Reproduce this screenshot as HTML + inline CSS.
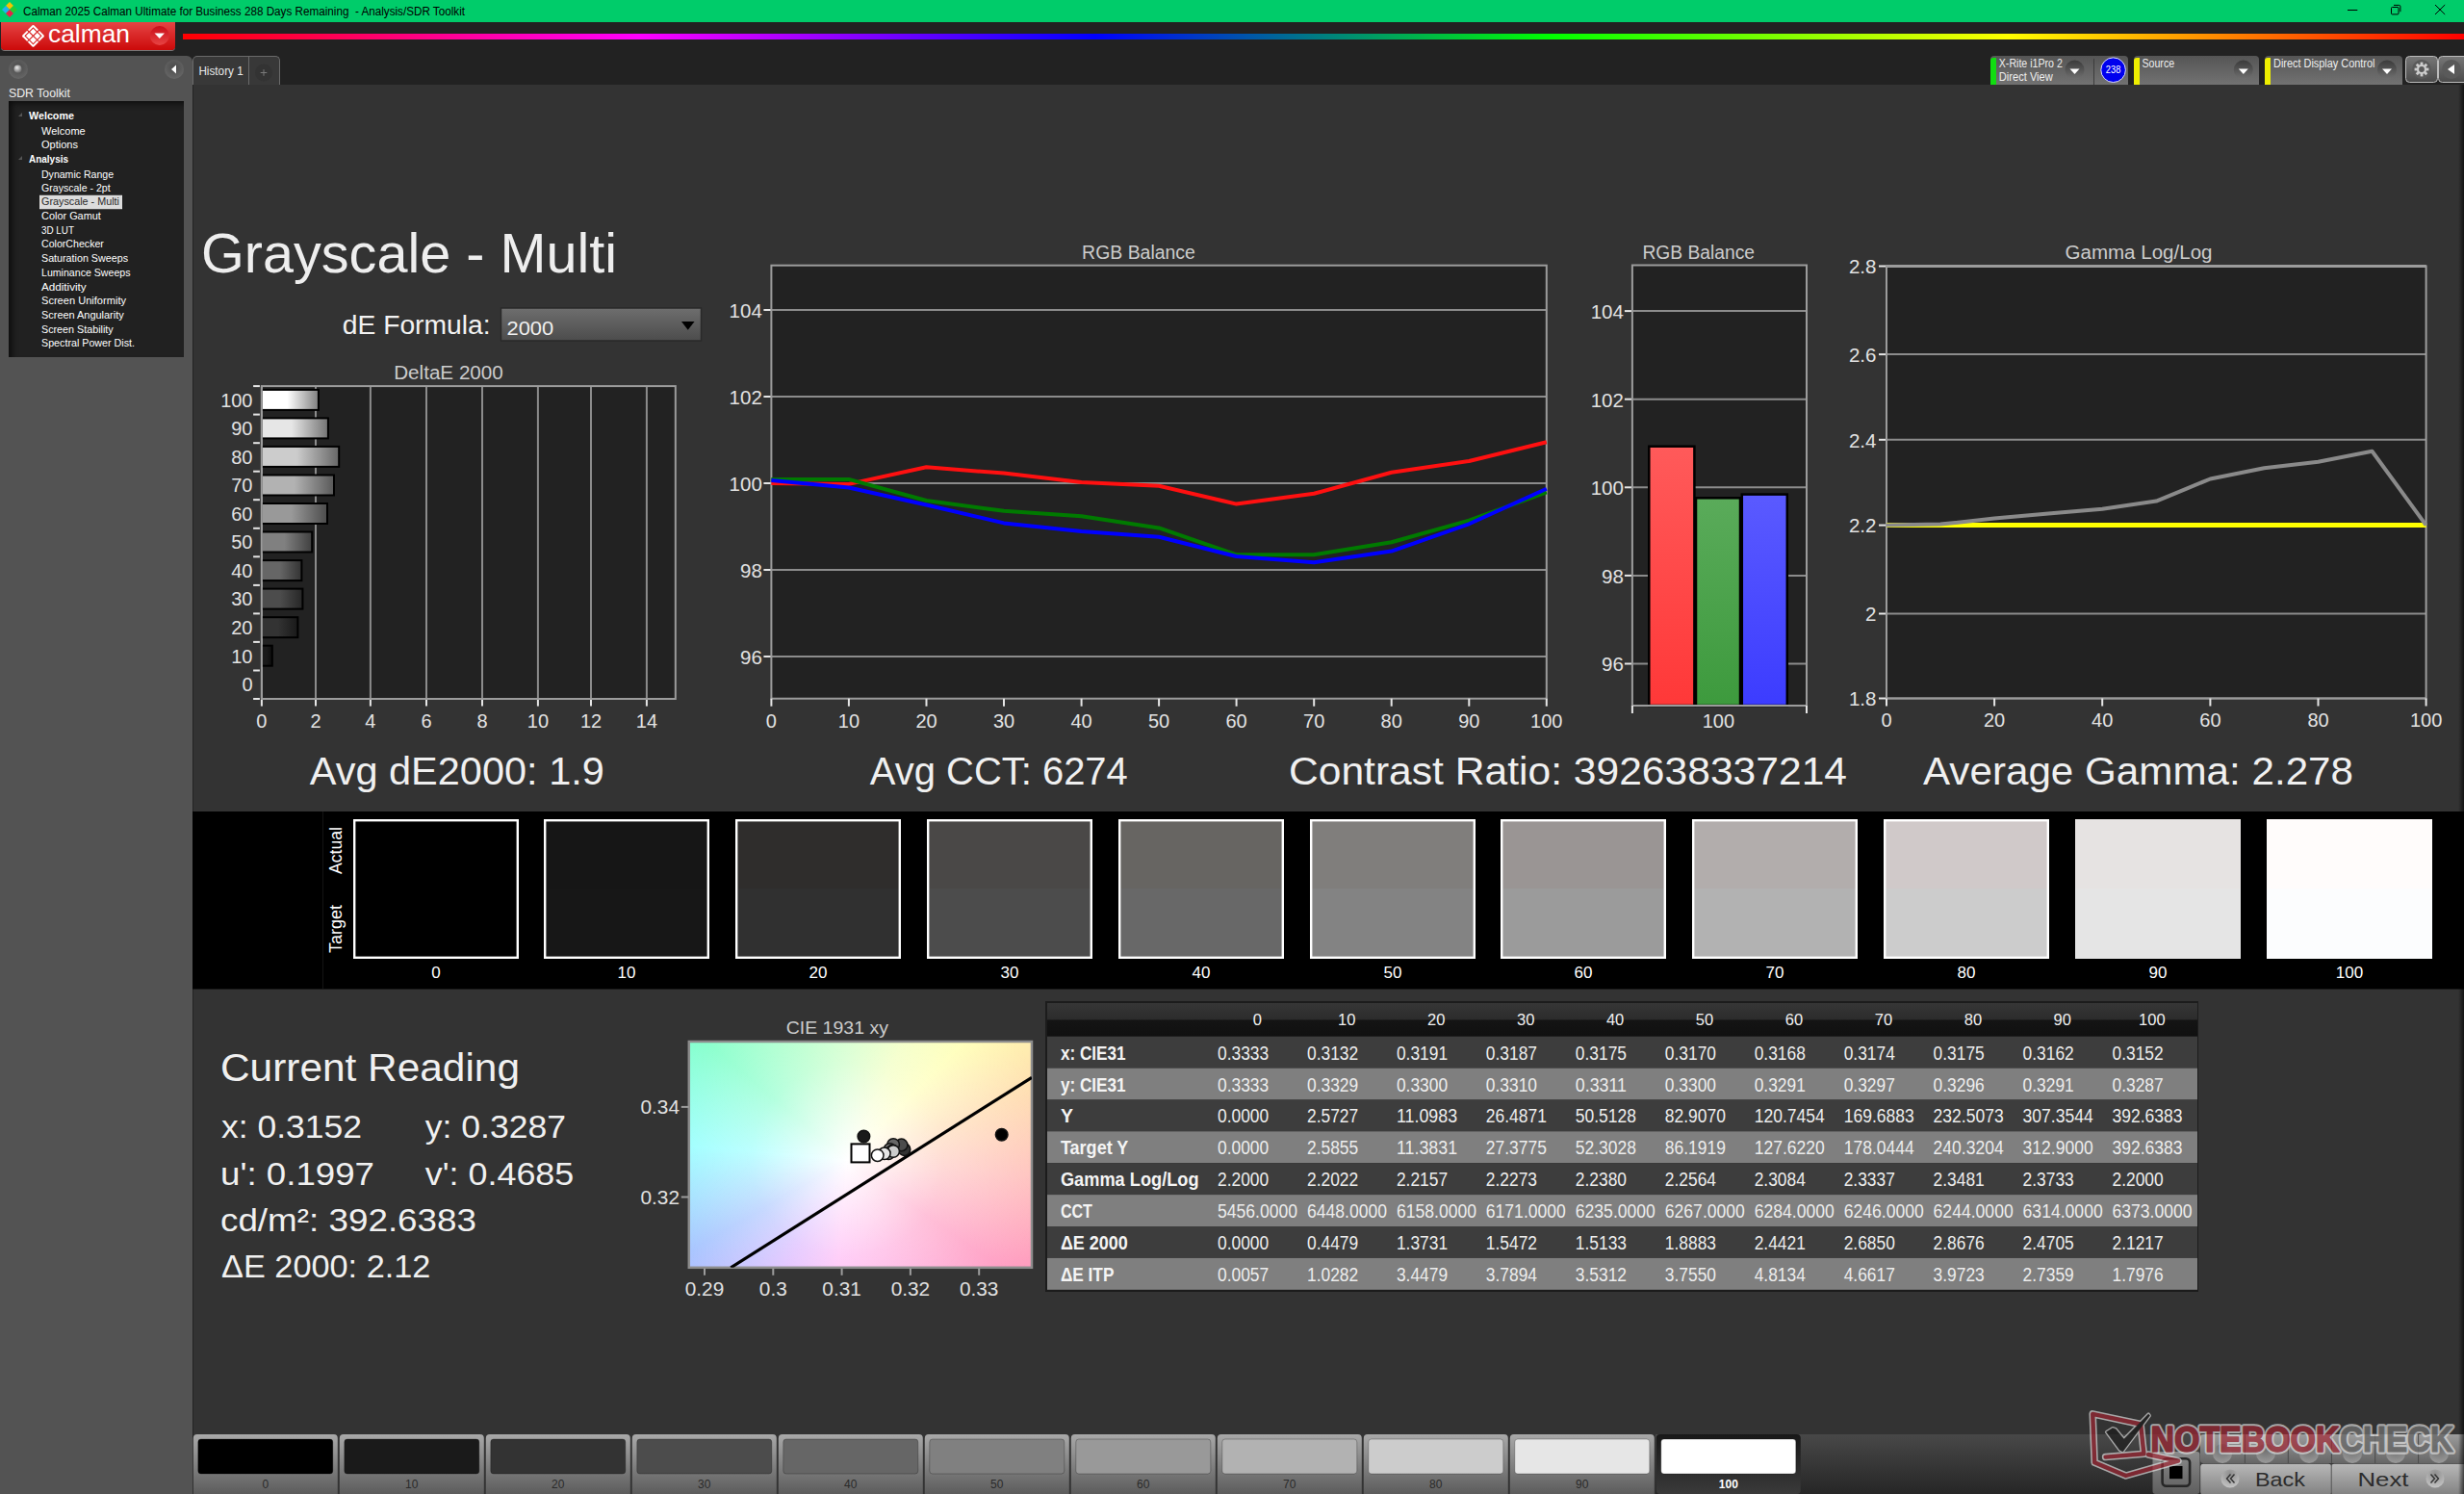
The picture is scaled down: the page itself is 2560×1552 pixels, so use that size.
<!DOCTYPE html>
<html><head><meta charset="utf-8"><title>Calman - Grayscale Multi</title>
<style>
html,body{margin:0;padding:0;width:2560px;height:1552px;overflow:hidden;background:#222;font-family:"Liberation Sans",sans-serif;}
</style></head><body>
<div style="position:absolute;left:0;top:0;width:2560px;height:23px;background:#00cc6a;"></div>
<svg style="position:absolute;left:0;top:0" width="24" height="23">
<polygon points="10,2 14,6 10,10 6,6" fill="#f5c400"/>
<polygon points="6,6 10,10 6,14 2,10" fill="#1eb4f0"/>
<polygon points="14,6 18,10 14,14 10,10" fill="#22cc33"/>
<polygon points="10,10 14,14 10,18 6,14" fill="#e8204a"/>
</svg>
<svg style="position:absolute;left:0;top:0" width="600" height="23"><text x="24" y="15.5" font-family="Liberation Sans" font-size="12" fill="#000" textLength="459" lengthAdjust="spacingAndGlyphs" xml:space="preserve">Calman 2025 Calman Ultimate for Business 288 Days Remaining  - Analysis/SDR Toolkit</text></svg>
<svg style="position:absolute;left:2420px;top:0" width="140" height="23">
<line x1="19" y1="10.5" x2="29.3" y2="10.5" stroke="#000" stroke-width="1"/>
<rect x="64.5" y="7.5" width="7.5" height="7.4" rx="1" fill="none" stroke="#000" stroke-width="1"/>
<path d="M67,5.4 H72.5 Q73.9,5.4 73.9,6.8 V12.2" fill="none" stroke="#000" stroke-width="1"/>
<path d="M110,5 L120.2,15 M120.2,5 L110,15" stroke="#000" stroke-width="1"/>
</svg>
<div style="position:absolute;left:0;top:23px;width:2560px;height:65px;background:#222222;"></div>
<div style="position:absolute;left:1px;top:23px;width:181px;height:29px;background:linear-gradient(#e54444,#cc0a0a);border-radius:0 0 4px 4px;box-shadow:0 1px 0 #777;"></div>
<svg style="position:absolute;left:0;top:23px" width="185" height="30">
<g transform="translate(34.47,14.36) rotate(45)">
<rect x="-8.4" y="-8.4" width="16.8" height="16.8" rx="1.2" fill="#fff"/>
<rect x="-5.9" y="-5.9" width="11.8" height="11.8" fill="none" stroke="#d82424" stroke-width="1.1"/>
<line x1="0" y1="-9" x2="0" y2="9" stroke="#d82424" stroke-width="1.1"/>
<line x1="-9" y1="0" x2="9" y2="0" stroke="#d82424" stroke-width="1.1"/>
</g>
<circle cx="165.8" cy="14" r="10" fill="url(#rg1)"/>
<defs><linearGradient id="rg1" x1="0" y1="0" x2="0" y2="1"><stop offset="0" stop-color="#c80d18"/><stop offset="1" stop-color="#e84444"/></linearGradient></defs>
<polygon points="160.5,11.5 171,11.5 165.8,17" fill="#fff"/>
</svg>
<svg style="position:absolute;left:0;top:20px" width="185" height="33"><text x="50" y="24" font-family="Liberation Sans" font-size="26" fill="#fff" textLength="85" lengthAdjust="spacingAndGlyphs">calman</text></svg>
<div style="position:absolute;left:190px;top:35px;width:2370px;height:6px;background:linear-gradient(90deg,#ff0000 0%,#ff00ff 20%,#0000ff 40%,#00ff00 60%,#ffff00 80%,#ff0000 100%);"></div>
<div style="position:absolute;left:0;top:58px;width:200px;height:1494px;background:#535353;border-radius:0 6px 0 0;"></div>
<svg style="position:absolute;left:0;top:58px" width="200" height="30">
<defs><radialGradient id="sb" cx="0.5" cy="0.4" r="0.6"><stop offset="0" stop-color="#4a4a4a"/><stop offset="1" stop-color="#666"/></radialGradient>
<radialGradient id="ball" cx="0.4" cy="0.35" r="0.6"><stop offset="0" stop-color="#eee"/><stop offset="1" stop-color="#777"/></radialGradient></defs>
<circle cx="19" cy="14" r="10" fill="url(#sb)"/>
<circle cx="18.5" cy="13.5" r="4" fill="url(#ball)"/>
<circle cx="181" cy="14" r="10" fill="url(#sb)"/>
<polygon points="178,14 183,9.5 183,18.5" fill="#fff"/>
</svg>
<svg style="position:absolute;left:0;top:85px" width="200" height="20"><text x="9" y="15.5" font-family="Liberation Sans" font-size="12" fill="#eeeeee" textLength="64" lengthAdjust="spacingAndGlyphs">SDR Toolkit</text></svg>
<div style="position:absolute;left:9px;top:105px;width:182px;height:266px;background:#212121;box-shadow:inset 5px 4px 6px -2px #0c0c0c;"></div>
<svg style="position:absolute;left:0;top:0" width="200" height="380">
<rect x="41.4" y="203.2" width="85.2" height="13.6" fill="#dcdcdc" stroke="#f2f2f2" stroke-width="0.8"/>
<text x="30" y="124" font-family="Liberation Sans" font-size="11" font-weight="bold" fill="#ffffff" textLength="46.9" lengthAdjust="spacingAndGlyphs">Welcome</text>
<text x="43" y="140" font-family="Liberation Sans" font-size="11"  fill="#ffffff" textLength="45.7" lengthAdjust="spacingAndGlyphs">Welcome</text>
<text x="43" y="154" font-family="Liberation Sans" font-size="11"  fill="#ffffff" textLength="38" lengthAdjust="spacingAndGlyphs">Options</text>
<text x="30" y="169" font-family="Liberation Sans" font-size="11" font-weight="bold" fill="#ffffff" textLength="41" lengthAdjust="spacingAndGlyphs">Analysis</text>
<text x="43" y="185" font-family="Liberation Sans" font-size="11"  fill="#ffffff" textLength="75" lengthAdjust="spacingAndGlyphs">Dynamic Range</text>
<text x="43" y="199" font-family="Liberation Sans" font-size="11"  fill="#ffffff" textLength="71.7" lengthAdjust="spacingAndGlyphs">Grayscale - 2pt</text>
<text x="43" y="213" font-family="Liberation Sans" font-size="11"  fill="#2a2a2a" textLength="81" lengthAdjust="spacingAndGlyphs">Grayscale - Multi</text>
<text x="43" y="228" font-family="Liberation Sans" font-size="11"  fill="#ffffff" textLength="61.9" lengthAdjust="spacingAndGlyphs">Color Gamut</text>
<text x="43" y="242.7" font-family="Liberation Sans" font-size="11"  fill="#ffffff" textLength="34" lengthAdjust="spacingAndGlyphs">3D LUT</text>
<text x="43" y="257.3" font-family="Liberation Sans" font-size="11"  fill="#ffffff" textLength="64.9" lengthAdjust="spacingAndGlyphs">ColorChecker</text>
<text x="43" y="272.4" font-family="Liberation Sans" font-size="11"  fill="#ffffff" textLength="90" lengthAdjust="spacingAndGlyphs">Saturation Sweeps</text>
<text x="43" y="286.8" font-family="Liberation Sans" font-size="11"  fill="#ffffff" textLength="92.5" lengthAdjust="spacingAndGlyphs">Luminance Sweeps</text>
<text x="43" y="301.6" font-family="Liberation Sans" font-size="11"  fill="#ffffff" textLength="46.7" lengthAdjust="spacingAndGlyphs">Additivity</text>
<text x="43" y="316.3" font-family="Liberation Sans" font-size="11"  fill="#ffffff" textLength="88" lengthAdjust="spacingAndGlyphs">Screen Uniformity</text>
<text x="43" y="331" font-family="Liberation Sans" font-size="11"  fill="#ffffff" textLength="85.7" lengthAdjust="spacingAndGlyphs">Screen Angularity</text>
<text x="43" y="345.7" font-family="Liberation Sans" font-size="11"  fill="#ffffff" textLength="74.7" lengthAdjust="spacingAndGlyphs">Screen Stability</text>
<text x="43" y="360.4" font-family="Liberation Sans" font-size="11"  fill="#ffffff" textLength="97" lengthAdjust="spacingAndGlyphs">Spectral Power Dist.</text>
<polygon points="23,117 23,121 19,121" fill="#555"/>
<polygon points="23,162 23,166 19,166" fill="#555"/>
</svg>
<div style="position:absolute;left:200px;top:58px;width:91px;height:30px;background:#383838;border:1px solid #6a6a6a;border-bottom:none;border-radius:5px 5px 0 0;box-sizing:border-box;"></div>
<div style="position:absolute;left:258px;top:59px;width:1px;height:29px;background:#6a6a6a;"></div>
<svg style="position:absolute;left:200px;top:58px" width="60" height="30"><text x="6.4" y="20" font-family="Liberation Sans" font-size="12" fill="#e8e8e8" textLength="46.3" lengthAdjust="spacingAndGlyphs">History 1</text></svg>
<svg style="position:absolute;left:259px;top:58px" width="32" height="30">
<circle cx="15" cy="17.5" r="9" fill="#333"/>
<path d="M15,14.2 V20.8 M11.7,17.5 H18.3" stroke="#7a7a7a" stroke-width="1"/>
</svg>
<div style="position:absolute;left:2068px;top:58px;width:143px;height:30px;background:linear-gradient(#555,#727272);border-radius:4px 4px 0 0;overflow:hidden;"><div style="position:absolute;left:0;top:2px;width:6px;height:28px;background:#11dd11;border-radius:3px 0 0 0;"></div></div>
<div style="position:absolute;left:2217px;top:58px;width:130px;height:30px;background:linear-gradient(#555,#727272);border-radius:4px 4px 0 0;overflow:hidden;"><div style="position:absolute;left:0;top:2px;width:6px;height:28px;background:#eeee00;border-radius:3px 0 0 0;"></div></div>
<div style="position:absolute;left:2353px;top:58px;width:143px;height:30px;background:linear-gradient(#555,#727272);border-radius:4px 4px 0 0;overflow:hidden;"><div style="position:absolute;left:0;top:2px;width:6px;height:28px;background:#eeee00;border-radius:3px 0 0 0;"></div></div>
<svg style="position:absolute;left:0;top:0" width="2560" height="90"><text x="2076.8" y="69.5" font-family="Liberation Sans" font-size="12" fill="#eeeeee" textLength="66" lengthAdjust="spacingAndGlyphs">X-Rite i1Pro 2</text><text x="2076.8" y="83.6" font-family="Liberation Sans" font-size="12" fill="#eeeeee" textLength="56" lengthAdjust="spacingAndGlyphs">Direct View</text><text x="2225.5" y="69.5" font-family="Liberation Sans" font-size="12" fill="#eeeeee" textLength="33.6" lengthAdjust="spacingAndGlyphs">Source</text><text x="2362" y="69.5" font-family="Liberation Sans" font-size="12" fill="#eeeeee" textLength="105.5" lengthAdjust="spacingAndGlyphs">Direct Display Control</text></svg>
<div style="position:absolute;left:2175px;top:61px;width:1px;height:27px;background:#3c3c3c;"></div>
<svg style="position:absolute;left:2060px;top:50px" width="500" height="40">
<defs><linearGradient id="dg" x1="0" y1="0" x2="0" y2="1"><stop offset="0" stop-color="#3a3a3a"/><stop offset="1" stop-color="#707070"/></linearGradient></defs>
<circle cx="95.5" cy="22.5" r="10" fill="url(#dg)"/>
<polygon points="90.5,21.6 100.5,21.6 95.5,26.9" fill="#fff"/>
<circle cx="270.8" cy="22.5" r="10" fill="url(#dg)"/>
<polygon points="265.8,21.6 275.8,21.6 270.8,26.9" fill="#fff"/>
<circle cx="420" cy="22.5" r="10" fill="url(#dg)"/>
<polygon points="415,21.6 425,21.6 420,26.9" fill="#fff"/>
<circle cx="135.6" cy="22.7" r="12.8" fill="#0000ee" stroke="#dcdcff" stroke-width="1"/>
<text x="135.6" y="26.4" font-family="Liberation Sans" font-size="10.5" fill="#fff" text-anchor="middle" textLength="15.5" lengthAdjust="spacingAndGlyphs">238</text>
<rect x="439.5" y="8.5" width="33" height="27" rx="4" fill="url(#gb)" stroke="#bbb" stroke-width="1"/>
<defs><linearGradient id="gb" x1="0" y1="0" x2="0" y2="1"><stop offset="0" stop-color="#777"/><stop offset="1" stop-color="#4a4a4a"/></linearGradient></defs>
<circle cx="456" cy="22" r="10" fill="#5a5a5a"/>
<g transform="translate(456,22)" fill="none" stroke="#ccc" stroke-width="2.2"><circle r="4"/></g>
<rect x="454.6" y="14.6" width="2.8" height="3.4" fill="#ccc" transform="rotate(0 456 22)"/>
<rect x="454.6" y="14.6" width="2.8" height="3.4" fill="#ccc" transform="rotate(45 456 22)"/>
<rect x="454.6" y="14.6" width="2.8" height="3.4" fill="#ccc" transform="rotate(90 456 22)"/>
<rect x="454.6" y="14.6" width="2.8" height="3.4" fill="#ccc" transform="rotate(135 456 22)"/>
<rect x="454.6" y="14.6" width="2.8" height="3.4" fill="#ccc" transform="rotate(180 456 22)"/>
<rect x="454.6" y="14.6" width="2.8" height="3.4" fill="#ccc" transform="rotate(225 456 22)"/>
<rect x="454.6" y="14.6" width="2.8" height="3.4" fill="#ccc" transform="rotate(270 456 22)"/>
<rect x="454.6" y="14.6" width="2.8" height="3.4" fill="#ccc" transform="rotate(315 456 22)"/>
<rect x="473.5" y="8.5" width="33" height="27" rx="4" fill="url(#gb)" stroke="#bbb" stroke-width="1"/>
<circle cx="487" cy="22" r="10" fill="#5a5a5a"/>
<polygon points="483,22 490,17 490,27" fill="#fff"/>
</svg>
<svg style="position:absolute;left:0;top:0" width="2560" height="1552">
<rect x="200" y="88" width="2360" height="1464" fill="#333333"/><line x1="200.5" y1="88" x2="200.5" y2="1552" stroke="#232323" stroke-width="1"/>
<text x="209" y="283" font-family="Liberation Sans" font-size="58" fill="#eeeeee" text-anchor="start" textLength="432" lengthAdjust="spacingAndGlyphs" >Grayscale - Multi</text>
<text x="355.7" y="347" font-family="Liberation Sans" font-size="27" fill="#f2f2f2" text-anchor="start" textLength="154" lengthAdjust="spacingAndGlyphs" >dE Formula:</text>
<defs><linearGradient id="dd" x1="0" y1="0" x2="0" y2="1"><stop offset="0" stop-color="#6e6e6e"/><stop offset="1" stop-color="#4c4c4c"/></linearGradient></defs>
<rect x="520.5" y="320" width="208" height="34" fill="url(#dd)" stroke="#2a2a2a" stroke-width="1.5"/>
<text x="526.5" y="348" font-family="Liberation Sans" font-size="21" fill="#f0f0f0" text-anchor="start" textLength="48.7" lengthAdjust="spacingAndGlyphs" >2000</text>
<polygon points="708,334 721.5,334 714.75,342.7" fill="#000"/>
<text x="466" y="394" font-family="Liberation Sans" font-size="20" fill="#cccccc" text-anchor="middle" textLength="113.7" lengthAdjust="spacingAndGlyphs" >DeltaE 2000</text>
<rect x="271.9" y="401.1" width="429.9" height="324.9" fill="#222222"/>
<line x1="328.0" y1="401.1" x2="328.0" y2="726" stroke="#8c8c8c" stroke-width="2"/>
<line x1="384.9" y1="401.1" x2="384.9" y2="726" stroke="#8c8c8c" stroke-width="2"/>
<line x1="443.0" y1="401.1" x2="443.0" y2="726" stroke="#8c8c8c" stroke-width="2"/>
<line x1="501.0" y1="401.1" x2="501.0" y2="726" stroke="#8c8c8c" stroke-width="2"/>
<line x1="558.9" y1="401.1" x2="558.9" y2="726" stroke="#8c8c8c" stroke-width="2"/>
<line x1="614.0" y1="401.1" x2="614.0" y2="726" stroke="#8c8c8c" stroke-width="2"/>
<line x1="671.9" y1="401.1" x2="671.9" y2="726" stroke="#8c8c8c" stroke-width="2"/>
<rect x="271.9" y="401.1" width="429.9" height="324.9" fill="none" stroke="#9c9c9c" stroke-width="2"/>
<defs>
<linearGradient id="db0" x1="0" y1="0" x2="1" y2="0"><stop offset="0" stop-color="rgb(0,0,0)"/><stop offset="0.45" stop-color="rgb(0,0,0)"/><stop offset="1" stop-color="rgb(0,0,0)"/></linearGradient>
<linearGradient id="db1" x1="0" y1="0" x2="1" y2="0"><stop offset="0" stop-color="rgb(26,26,26)"/><stop offset="0.45" stop-color="rgb(26,26,26)"/><stop offset="1" stop-color="rgb(13,13,13)"/></linearGradient>
<linearGradient id="db2" x1="0" y1="0" x2="1" y2="0"><stop offset="0" stop-color="rgb(51,51,51)"/><stop offset="0.45" stop-color="rgb(51,51,51)"/><stop offset="1" stop-color="rgb(25,25,25)"/></linearGradient>
<linearGradient id="db3" x1="0" y1="0" x2="1" y2="0"><stop offset="0" stop-color="rgb(76,76,76)"/><stop offset="0.45" stop-color="rgb(76,76,76)"/><stop offset="1" stop-color="rgb(38,38,38)"/></linearGradient>
<linearGradient id="db4" x1="0" y1="0" x2="1" y2="0"><stop offset="0" stop-color="rgb(102,102,102)"/><stop offset="0.45" stop-color="rgb(102,102,102)"/><stop offset="1" stop-color="rgb(51,51,51)"/></linearGradient>
<linearGradient id="db5" x1="0" y1="0" x2="1" y2="0"><stop offset="0" stop-color="rgb(128,128,128)"/><stop offset="0.45" stop-color="rgb(128,128,128)"/><stop offset="1" stop-color="rgb(64,64,64)"/></linearGradient>
<linearGradient id="db6" x1="0" y1="0" x2="1" y2="0"><stop offset="0" stop-color="rgb(153,153,153)"/><stop offset="0.45" stop-color="rgb(153,153,153)"/><stop offset="1" stop-color="rgb(76,76,76)"/></linearGradient>
<linearGradient id="db7" x1="0" y1="0" x2="1" y2="0"><stop offset="0" stop-color="rgb(178,178,178)"/><stop offset="0.45" stop-color="rgb(178,178,178)"/><stop offset="1" stop-color="rgb(89,89,89)"/></linearGradient>
<linearGradient id="db8" x1="0" y1="0" x2="1" y2="0"><stop offset="0" stop-color="rgb(204,204,204)"/><stop offset="0.45" stop-color="rgb(204,204,204)"/><stop offset="1" stop-color="rgb(102,102,102)"/></linearGradient>
<linearGradient id="db9" x1="0" y1="0" x2="1" y2="0"><stop offset="0" stop-color="rgb(230,230,230)"/><stop offset="0.45" stop-color="rgb(230,230,230)"/><stop offset="1" stop-color="rgb(115,115,115)"/></linearGradient>
<linearGradient id="db10" x1="0" y1="0" x2="1" y2="0"><stop offset="0" stop-color="rgb(255,255,255)"/><stop offset="0.45" stop-color="rgb(255,255,255)"/><stop offset="1" stop-color="rgb(127,127,127)"/></linearGradient>
</defs>
<text x="262.5" y="718.0" font-family="Liberation Sans" font-size="20" fill="#e2e2e2" text-anchor="end" >0</text>
<rect x="272" y="670.7" width="10.8" height="21" fill="url(#db1)" stroke="#000" stroke-width="2"/>
<text x="262.5" y="688.5" font-family="Liberation Sans" font-size="20" fill="#e2e2e2" text-anchor="end" >10</text>
<rect x="272" y="641.2" width="37.4" height="21" fill="url(#db2)" stroke="#000" stroke-width="2"/>
<text x="262.5" y="659.0" font-family="Liberation Sans" font-size="20" fill="#e2e2e2" text-anchor="end" >20</text>
<rect x="272" y="611.6" width="42.4" height="21" fill="url(#db3)" stroke="#000" stroke-width="2"/>
<text x="262.5" y="629.4" font-family="Liberation Sans" font-size="20" fill="#e2e2e2" text-anchor="end" >30</text>
<rect x="272" y="582.1" width="41.4" height="21" fill="url(#db4)" stroke="#000" stroke-width="2"/>
<text x="262.5" y="599.9" font-family="Liberation Sans" font-size="20" fill="#e2e2e2" text-anchor="end" >40</text>
<rect x="272" y="552.5" width="52.2" height="21" fill="url(#db5)" stroke="#000" stroke-width="2"/>
<text x="262.5" y="570.3" font-family="Liberation Sans" font-size="20" fill="#e2e2e2" text-anchor="end" >50</text>
<rect x="272" y="523.0" width="68.0" height="21" fill="url(#db6)" stroke="#000" stroke-width="2"/>
<text x="262.5" y="540.8" font-family="Liberation Sans" font-size="20" fill="#e2e2e2" text-anchor="end" >60</text>
<rect x="272" y="493.5" width="75.0" height="21" fill="url(#db7)" stroke="#000" stroke-width="2"/>
<text x="262.5" y="511.3" font-family="Liberation Sans" font-size="20" fill="#e2e2e2" text-anchor="end" >70</text>
<rect x="272" y="463.9" width="80.2" height="21" fill="url(#db8)" stroke="#000" stroke-width="2"/>
<text x="262.5" y="481.7" font-family="Liberation Sans" font-size="20" fill="#e2e2e2" text-anchor="end" >80</text>
<rect x="272" y="434.4" width="68.9" height="21" fill="url(#db9)" stroke="#000" stroke-width="2"/>
<text x="262.5" y="452.2" font-family="Liberation Sans" font-size="20" fill="#e2e2e2" text-anchor="end" >90</text>
<rect x="272" y="404.9" width="58.9" height="21" fill="url(#db10)" stroke="#000" stroke-width="2"/>
<text x="262.5" y="422.7" font-family="Liberation Sans" font-size="20" fill="#e2e2e2" text-anchor="end" >100</text>
<line x1="271.9" y1="401.1" x2="271.9" y2="726" stroke="#9c9c9c" stroke-width="2"/>
<line x1="263.1" y1="401.1" x2="269.9" y2="401.1" stroke="#e6e6e6" stroke-width="2"/>
<line x1="263.1" y1="430.6" x2="269.9" y2="430.6" stroke="#e6e6e6" stroke-width="2"/>
<line x1="263.1" y1="460.2" x2="269.9" y2="460.2" stroke="#e6e6e6" stroke-width="2"/>
<line x1="263.1" y1="489.7" x2="269.9" y2="489.7" stroke="#e6e6e6" stroke-width="2"/>
<line x1="263.1" y1="519.2" x2="269.9" y2="519.2" stroke="#e6e6e6" stroke-width="2"/>
<line x1="263.1" y1="548.8" x2="269.9" y2="548.8" stroke="#e6e6e6" stroke-width="2"/>
<line x1="263.1" y1="578.3" x2="269.9" y2="578.3" stroke="#e6e6e6" stroke-width="2"/>
<line x1="263.1" y1="607.9" x2="269.9" y2="607.9" stroke="#e6e6e6" stroke-width="2"/>
<line x1="263.1" y1="637.4" x2="269.9" y2="637.4" stroke="#e6e6e6" stroke-width="2"/>
<line x1="263.1" y1="666.9" x2="269.9" y2="666.9" stroke="#e6e6e6" stroke-width="2"/>
<line x1="263.1" y1="696.5" x2="269.9" y2="696.5" stroke="#e6e6e6" stroke-width="2"/>
<line x1="263.1" y1="726.0" x2="269.9" y2="726.0" stroke="#e6e6e6" stroke-width="2"/>
<line x1="271.9" y1="727" x2="271.9" y2="733.6" stroke="#e6e6e6" stroke-width="2"/>
<text x="271.9" y="755.6" font-family="Liberation Sans" font-size="20" fill="#e2e2e2" text-anchor="middle" >0</text>
<line x1="328.0" y1="727" x2="328.0" y2="733.6" stroke="#e6e6e6" stroke-width="2"/>
<text x="328.0" y="755.6" font-family="Liberation Sans" font-size="20" fill="#e2e2e2" text-anchor="middle" >2</text>
<line x1="384.9" y1="727" x2="384.9" y2="733.6" stroke="#e6e6e6" stroke-width="2"/>
<text x="384.9" y="755.6" font-family="Liberation Sans" font-size="20" fill="#e2e2e2" text-anchor="middle" >4</text>
<line x1="443.0" y1="727" x2="443.0" y2="733.6" stroke="#e6e6e6" stroke-width="2"/>
<text x="443.0" y="755.6" font-family="Liberation Sans" font-size="20" fill="#e2e2e2" text-anchor="middle" >6</text>
<line x1="501.0" y1="727" x2="501.0" y2="733.6" stroke="#e6e6e6" stroke-width="2"/>
<text x="501.0" y="755.6" font-family="Liberation Sans" font-size="20" fill="#e2e2e2" text-anchor="middle" >8</text>
<line x1="558.9" y1="727" x2="558.9" y2="733.6" stroke="#e6e6e6" stroke-width="2"/>
<text x="558.9" y="755.6" font-family="Liberation Sans" font-size="20" fill="#e2e2e2" text-anchor="middle" >10</text>
<line x1="614.0" y1="727" x2="614.0" y2="733.6" stroke="#e6e6e6" stroke-width="2"/>
<text x="614.0" y="755.6" font-family="Liberation Sans" font-size="20" fill="#e2e2e2" text-anchor="middle" >12</text>
<line x1="671.9" y1="727" x2="671.9" y2="733.6" stroke="#e6e6e6" stroke-width="2"/>
<text x="671.9" y="755.6" font-family="Liberation Sans" font-size="20" fill="#e2e2e2" text-anchor="middle" >14</text>
<text x="1183" y="269.3" font-family="Liberation Sans" font-size="20" fill="#cccccc" text-anchor="middle" textLength="117.8" lengthAdjust="spacingAndGlyphs" >RGB Balance</text>
<rect x="801.4" y="275.7" width="805.4" height="450.00000000000006" fill="#222222"/>
<line x1="801.4" y1="322.0" x2="1606.8" y2="322.0" stroke="#8c8c8c" stroke-width="2"/>
<line x1="793.4" y1="322.0" x2="801.4" y2="322.0" stroke="#e6e6e6" stroke-width="2"/>
<text x="791.8" y="329.8" font-family="Liberation Sans" font-size="20.5" fill="#e2e2e2" text-anchor="end" >104</text>
<line x1="801.4" y1="412.0" x2="1606.8" y2="412.0" stroke="#8c8c8c" stroke-width="2"/>
<line x1="793.4" y1="412.0" x2="801.4" y2="412.0" stroke="#e6e6e6" stroke-width="2"/>
<text x="791.8" y="419.8" font-family="Liberation Sans" font-size="20.5" fill="#e2e2e2" text-anchor="end" >102</text>
<line x1="801.4" y1="502.0" x2="1606.8" y2="502.0" stroke="#8c8c8c" stroke-width="2"/>
<line x1="793.4" y1="502.0" x2="801.4" y2="502.0" stroke="#e6e6e6" stroke-width="2"/>
<text x="791.8" y="509.8" font-family="Liberation Sans" font-size="20.5" fill="#e2e2e2" text-anchor="end" >100</text>
<line x1="801.4" y1="592.0" x2="1606.8" y2="592.0" stroke="#8c8c8c" stroke-width="2"/>
<line x1="793.4" y1="592.0" x2="801.4" y2="592.0" stroke="#e6e6e6" stroke-width="2"/>
<text x="791.8" y="599.8" font-family="Liberation Sans" font-size="20.5" fill="#e2e2e2" text-anchor="end" >98</text>
<line x1="801.4" y1="682.0" x2="1606.8" y2="682.0" stroke="#8c8c8c" stroke-width="2"/>
<line x1="793.4" y1="682.0" x2="801.4" y2="682.0" stroke="#e6e6e6" stroke-width="2"/>
<text x="791.8" y="689.8" font-family="Liberation Sans" font-size="20.5" fill="#e2e2e2" text-anchor="end" >96</text>
<rect x="801.4" y="275.7" width="805.4" height="450.00000000000006" fill="none" stroke="#9c9c9c" stroke-width="2"/>
<line x1="801.4" y1="725.7" x2="801.4" y2="733.7" stroke="#e6e6e6" stroke-width="2"/>
<text x="801.4" y="756" font-family="Liberation Sans" font-size="20" fill="#e2e2e2" text-anchor="middle" >0</text>
<line x1="881.9" y1="725.7" x2="881.9" y2="733.7" stroke="#e6e6e6" stroke-width="2"/>
<text x="881.9" y="756" font-family="Liberation Sans" font-size="20" fill="#e2e2e2" text-anchor="middle" >10</text>
<line x1="962.5" y1="725.7" x2="962.5" y2="733.7" stroke="#e6e6e6" stroke-width="2"/>
<text x="962.5" y="756" font-family="Liberation Sans" font-size="20" fill="#e2e2e2" text-anchor="middle" >20</text>
<line x1="1043.0" y1="725.7" x2="1043.0" y2="733.7" stroke="#e6e6e6" stroke-width="2"/>
<text x="1043.0" y="756" font-family="Liberation Sans" font-size="20" fill="#e2e2e2" text-anchor="middle" >30</text>
<line x1="1123.6" y1="725.7" x2="1123.6" y2="733.7" stroke="#e6e6e6" stroke-width="2"/>
<text x="1123.6" y="756" font-family="Liberation Sans" font-size="20" fill="#e2e2e2" text-anchor="middle" >40</text>
<line x1="1204.1" y1="725.7" x2="1204.1" y2="733.7" stroke="#e6e6e6" stroke-width="2"/>
<text x="1204.1" y="756" font-family="Liberation Sans" font-size="20" fill="#e2e2e2" text-anchor="middle" >50</text>
<line x1="1284.6" y1="725.7" x2="1284.6" y2="733.7" stroke="#e6e6e6" stroke-width="2"/>
<text x="1284.6" y="756" font-family="Liberation Sans" font-size="20" fill="#e2e2e2" text-anchor="middle" >60</text>
<line x1="1365.2" y1="725.7" x2="1365.2" y2="733.7" stroke="#e6e6e6" stroke-width="2"/>
<text x="1365.2" y="756" font-family="Liberation Sans" font-size="20" fill="#e2e2e2" text-anchor="middle" >70</text>
<line x1="1445.7" y1="725.7" x2="1445.7" y2="733.7" stroke="#e6e6e6" stroke-width="2"/>
<text x="1445.7" y="756" font-family="Liberation Sans" font-size="20" fill="#e2e2e2" text-anchor="middle" >80</text>
<line x1="1526.3" y1="725.7" x2="1526.3" y2="733.7" stroke="#e6e6e6" stroke-width="2"/>
<text x="1526.3" y="756" font-family="Liberation Sans" font-size="20" fill="#e2e2e2" text-anchor="middle" >90</text>
<line x1="1606.8" y1="725.7" x2="1606.8" y2="733.7" stroke="#e6e6e6" stroke-width="2"/>
<text x="1606.8" y="756" font-family="Liberation Sans" font-size="20" fill="#e2e2e2" text-anchor="middle" >100</text>
<polyline points="801.4,502.0 881.9,502.9 962.5,485.3 1043.0,491.6 1123.6,501.1 1204.1,504.7 1284.6,523.6 1365.2,512.8 1445.7,490.8 1526.3,479.0 1606.8,459.2" fill="none" stroke="#ff1010" stroke-width="4" stroke-linejoin="round"/>
<polyline points="801.4,497.9 881.9,497.9 962.5,520.0 1043.0,530.8 1123.6,536.2 1204.1,548.4 1284.6,576.3 1365.2,576.3 1445.7,563.2 1526.3,540.7 1606.8,511.4" fill="none" stroke="#007a00" stroke-width="4" stroke-linejoin="round"/>
<polyline points="801.4,498.9 881.9,506.5 962.5,524.5 1043.0,543.4 1123.6,551.9 1204.1,557.8 1284.6,578.0 1365.2,584.3 1445.7,572.6 1526.3,544.3 1606.8,507.8" fill="none" stroke="#0000ff" stroke-width="4" stroke-linejoin="round"/>
<text x="1764.7" y="268.6" font-family="Liberation Sans" font-size="20" fill="#cccccc" text-anchor="middle" textLength="116.6" lengthAdjust="spacingAndGlyphs" >RGB Balance</text>
<rect x="1695.9" y="275.5" width="181.0999999999999" height="457.5" fill="#222222"/>
<line x1="1695.9" y1="323.1" x2="1877" y2="323.1" stroke="#8c8c8c" stroke-width="2"/>
<line x1="1687.9" y1="323.1" x2="1695.9" y2="323.1" stroke="#e6e6e6" stroke-width="2"/>
<text x="1686.9" y="330.9" font-family="Liberation Sans" font-size="20.5" fill="#e2e2e2" text-anchor="end" >104</text>
<line x1="1695.9" y1="414.7" x2="1877" y2="414.7" stroke="#8c8c8c" stroke-width="2"/>
<line x1="1687.9" y1="414.7" x2="1695.9" y2="414.7" stroke="#e6e6e6" stroke-width="2"/>
<text x="1686.9" y="422.5" font-family="Liberation Sans" font-size="20.5" fill="#e2e2e2" text-anchor="end" >102</text>
<line x1="1695.9" y1="506.3" x2="1877" y2="506.3" stroke="#8c8c8c" stroke-width="2"/>
<line x1="1687.9" y1="506.3" x2="1695.9" y2="506.3" stroke="#e6e6e6" stroke-width="2"/>
<text x="1686.9" y="514.1" font-family="Liberation Sans" font-size="20.5" fill="#e2e2e2" text-anchor="end" >100</text>
<line x1="1695.9" y1="597.9" x2="1877" y2="597.9" stroke="#8c8c8c" stroke-width="2"/>
<line x1="1687.9" y1="597.9" x2="1695.9" y2="597.9" stroke="#e6e6e6" stroke-width="2"/>
<text x="1686.9" y="605.7" font-family="Liberation Sans" font-size="20.5" fill="#e2e2e2" text-anchor="end" >98</text>
<line x1="1695.9" y1="689.5" x2="1877" y2="689.5" stroke="#8c8c8c" stroke-width="2"/>
<line x1="1687.9" y1="689.5" x2="1695.9" y2="689.5" stroke="#e6e6e6" stroke-width="2"/>
<text x="1686.9" y="697.3" font-family="Liberation Sans" font-size="20.5" fill="#e2e2e2" text-anchor="end" >96</text>
<defs><linearGradient id="br" x1="0" y1="0" x2="0" y2="1"><stop offset="0" stop-color="#ff5a5a"/><stop offset="1" stop-color="#ff3838"/></linearGradient><linearGradient id="bgg" x1="0" y1="0" x2="0" y2="1"><stop offset="0" stop-color="#5aab5a"/><stop offset="1" stop-color="#3d9a3d"/></linearGradient><linearGradient id="bb" x1="0" y1="0" x2="0" y2="1"><stop offset="0" stop-color="#5a5aff"/><stop offset="1" stop-color="#3c3cff"/></linearGradient></defs>
<rect x="1713.3" y="463.7" width="47.1" height="269.3" fill="url(#br)" stroke="#000" stroke-width="2.5"/>
<rect x="1762" y="517.3" width="46.0" height="215.7" fill="url(#bgg)" stroke="#000" stroke-width="2.5"/>
<rect x="1809.8" y="513.6" width="47.0" height="219.4" fill="url(#bb)" stroke="#000" stroke-width="2.5"/>
<rect x="1695.9" y="275.5" width="181.0999999999999" height="457.5" fill="none" stroke="#9c9c9c" stroke-width="2"/>
<line x1="1695.9" y1="733" x2="1695.9" y2="741" stroke="#e6e6e6" stroke-width="2"/>
<line x1="1877" y1="733" x2="1877" y2="741" stroke="#e6e6e6" stroke-width="2"/>
<text x="1785.4" y="755.5" font-family="Liberation Sans" font-size="20" fill="#e2e2e2" text-anchor="middle" >100</text>
<text x="2222" y="268.5" font-family="Liberation Sans" font-size="20" fill="#cccccc" text-anchor="middle" textLength="153" lengthAdjust="spacingAndGlyphs" >Gamma Log/Log</text>
<rect x="1960" y="276.5" width="560.5999999999999" height="449.0" fill="#222222"/>
<line x1="1960" y1="276.5" x2="2520.6" y2="276.5" stroke="#8c8c8c" stroke-width="2"/>
<line x1="1952" y1="276.5" x2="1960" y2="276.5" stroke="#e6e6e6" stroke-width="2"/>
<text x="1949.4" y="284.3" font-family="Liberation Sans" font-size="20.5" fill="#e2e2e2" text-anchor="end" >2.8</text>
<line x1="1960" y1="368.1" x2="2520.6" y2="368.1" stroke="#8c8c8c" stroke-width="2"/>
<line x1="1952" y1="368.1" x2="1960" y2="368.1" stroke="#e6e6e6" stroke-width="2"/>
<text x="1949.4" y="375.9" font-family="Liberation Sans" font-size="20.5" fill="#e2e2e2" text-anchor="end" >2.6</text>
<line x1="1960" y1="456.8" x2="2520.6" y2="456.8" stroke="#8c8c8c" stroke-width="2"/>
<line x1="1952" y1="456.8" x2="1960" y2="456.8" stroke="#e6e6e6" stroke-width="2"/>
<text x="1949.4" y="464.6" font-family="Liberation Sans" font-size="20.5" fill="#e2e2e2" text-anchor="end" >2.4</text>
<line x1="1960" y1="545.6" x2="2520.6" y2="545.6" stroke="#8c8c8c" stroke-width="2"/>
<line x1="1952" y1="545.6" x2="1960" y2="545.6" stroke="#e6e6e6" stroke-width="2"/>
<text x="1949.4" y="553.4" font-family="Liberation Sans" font-size="20.5" fill="#e2e2e2" text-anchor="end" >2.2</text>
<line x1="1960" y1="637.5" x2="2520.6" y2="637.5" stroke="#8c8c8c" stroke-width="2"/>
<line x1="1952" y1="637.5" x2="1960" y2="637.5" stroke="#e6e6e6" stroke-width="2"/>
<text x="1949.4" y="645.3" font-family="Liberation Sans" font-size="20.5" fill="#e2e2e2" text-anchor="end" >2</text>
<line x1="1960" y1="725.5" x2="2520.6" y2="725.5" stroke="#8c8c8c" stroke-width="2"/>
<line x1="1952" y1="725.5" x2="1960" y2="725.5" stroke="#e6e6e6" stroke-width="2"/>
<text x="1949.4" y="733.3" font-family="Liberation Sans" font-size="20.5" fill="#e2e2e2" text-anchor="end" >1.8</text>
<rect x="1960" y="276.5" width="560.5999999999999" height="449.0" fill="none" stroke="#9c9c9c" stroke-width="2"/>
<line x1="1960" y1="276.5" x2="2520.6" y2="276.5" stroke="#9c9c9c" stroke-width="3"/>
<line x1="1960.0" y1="725.5" x2="1960.0" y2="733.5" stroke="#e6e6e6" stroke-width="2"/>
<text x="1960.0" y="755" font-family="Liberation Sans" font-size="20" fill="#e2e2e2" text-anchor="middle" >0</text>
<line x1="2072.1" y1="725.5" x2="2072.1" y2="733.5" stroke="#e6e6e6" stroke-width="2"/>
<text x="2072.1" y="755" font-family="Liberation Sans" font-size="20" fill="#e2e2e2" text-anchor="middle" >20</text>
<line x1="2184.2" y1="725.5" x2="2184.2" y2="733.5" stroke="#e6e6e6" stroke-width="2"/>
<text x="2184.2" y="755" font-family="Liberation Sans" font-size="20" fill="#e2e2e2" text-anchor="middle" >40</text>
<line x1="2296.4" y1="725.5" x2="2296.4" y2="733.5" stroke="#e6e6e6" stroke-width="2"/>
<text x="2296.4" y="755" font-family="Liberation Sans" font-size="20" fill="#e2e2e2" text-anchor="middle" >60</text>
<line x1="2408.5" y1="725.5" x2="2408.5" y2="733.5" stroke="#e6e6e6" stroke-width="2"/>
<text x="2408.5" y="755" font-family="Liberation Sans" font-size="20" fill="#e2e2e2" text-anchor="middle" >80</text>
<line x1="2520.6" y1="725.5" x2="2520.6" y2="733.5" stroke="#e6e6e6" stroke-width="2"/>
<text x="2520.6" y="755" font-family="Liberation Sans" font-size="20" fill="#e2e2e2" text-anchor="middle" >100</text>
<line x1="1960" y1="545.6" x2="2520.6" y2="545.6" stroke="#ffff00" stroke-width="5"/>
<polyline points="1960.0,545.6 2016.1,544.6 2072.1,538.6 2128.2,533.5 2184.2,528.7 2240.3,520.6 2296.4,497.5 2352.4,486.2 2408.5,479.8 2464.5,468.7 2520.6,545.6" fill="none" stroke="#8a8a8a" stroke-width="4" stroke-linejoin="round"/>
<text x="321.8" y="815" font-family="Liberation Sans" font-size="41" fill="#f0f0f0" text-anchor="start" textLength="306" lengthAdjust="spacingAndGlyphs" >Avg dE2000: 1.9</text>
<text x="903.8" y="815" font-family="Liberation Sans" font-size="41" fill="#f0f0f0" text-anchor="start" textLength="268" lengthAdjust="spacingAndGlyphs" >Avg CCT: 6274</text>
<text x="1339" y="815" font-family="Liberation Sans" font-size="41" fill="#f0f0f0" text-anchor="start" textLength="580" lengthAdjust="spacingAndGlyphs" >Contrast Ratio: 392638337214</text>
<text x="1998" y="815" font-family="Liberation Sans" font-size="41" fill="#f0f0f0" text-anchor="start" textLength="447" lengthAdjust="spacingAndGlyphs" >Average Gamma: 2.278</text>
<rect x="200" y="843" width="2360" height="184.5" fill="#000"/>
<line x1="335.5" y1="843" x2="335.5" y2="1027" stroke="#141414" stroke-width="1"/>
<rect x="367" y="851" width="172" height="145" fill="#000000" shape-rendering="crispEdges"/>
<rect x="367" y="851" width="172" height="72" fill="#000000" shape-rendering="crispEdges"/>
<rect x="368.2" y="852.2" width="169.6" height="142.6" fill="none" stroke="#ffffff" stroke-width="2.4"/>
<text x="453.0" y="1015.8" font-family="Liberation Sans" font-size="17" fill="#ffffff" text-anchor="middle" >0</text>
<rect x="565" y="851" width="172" height="145" fill="#171717" shape-rendering="crispEdges"/>
<rect x="565" y="851" width="172" height="72" fill="#161616" shape-rendering="crispEdges"/>
<rect x="566.2" y="852.2" width="169.6" height="142.6" fill="none" stroke="#ffffff" stroke-width="2.4"/>
<text x="651.0" y="1015.8" font-family="Liberation Sans" font-size="17" fill="#ffffff" text-anchor="middle" >10</text>
<rect x="764" y="851" width="172" height="145" fill="#303030" shape-rendering="crispEdges"/>
<rect x="764" y="851" width="172" height="72" fill="#2f2d2c" shape-rendering="crispEdges"/>
<rect x="765.2" y="852.2" width="169.6" height="142.6" fill="none" stroke="#ffffff" stroke-width="2.4"/>
<text x="850.0" y="1015.8" font-family="Liberation Sans" font-size="17" fill="#ffffff" text-anchor="middle" >20</text>
<rect x="963" y="851" width="172" height="145" fill="#4c4c4c" shape-rendering="crispEdges"/>
<rect x="963" y="851" width="172" height="72" fill="#4a4847" shape-rendering="crispEdges"/>
<rect x="964.2" y="852.2" width="169.6" height="142.6" fill="none" stroke="#ffffff" stroke-width="2.4"/>
<text x="1049.0" y="1015.8" font-family="Liberation Sans" font-size="17" fill="#ffffff" text-anchor="middle" >30</text>
<rect x="1162" y="851" width="172" height="145" fill="#686868" shape-rendering="crispEdges"/>
<rect x="1162" y="851" width="172" height="72" fill="#676562" shape-rendering="crispEdges"/>
<rect x="1163.2" y="852.2" width="169.6" height="142.6" fill="none" stroke="#ffffff" stroke-width="2.4"/>
<text x="1248.0" y="1015.8" font-family="Liberation Sans" font-size="17" fill="#ffffff" text-anchor="middle" >40</text>
<rect x="1361" y="851" width="172" height="145" fill="#838383" shape-rendering="crispEdges"/>
<rect x="1361" y="851" width="172" height="72" fill="#807e7c" shape-rendering="crispEdges"/>
<rect x="1362.2" y="852.2" width="169.6" height="142.6" fill="none" stroke="#ffffff" stroke-width="2.4"/>
<text x="1447.0" y="1015.8" font-family="Liberation Sans" font-size="17" fill="#ffffff" text-anchor="middle" >50</text>
<rect x="1559" y="851" width="172" height="145" fill="#9b9b9b" shape-rendering="crispEdges"/>
<rect x="1559" y="851" width="172" height="72" fill="#9a9594" shape-rendering="crispEdges"/>
<rect x="1560.2" y="852.2" width="169.6" height="142.6" fill="none" stroke="#ffffff" stroke-width="2.4"/>
<text x="1645.0" y="1015.8" font-family="Liberation Sans" font-size="17" fill="#ffffff" text-anchor="middle" >60</text>
<rect x="1758" y="851" width="172" height="145" fill="#b2b2b2" shape-rendering="crispEdges"/>
<rect x="1758" y="851" width="172" height="72" fill="#b2adac" shape-rendering="crispEdges"/>
<rect x="1759.2" y="852.2" width="169.6" height="142.6" fill="none" stroke="#ffffff" stroke-width="2.4"/>
<text x="1844.0" y="1015.8" font-family="Liberation Sans" font-size="17" fill="#ffffff" text-anchor="middle" >70</text>
<rect x="1957" y="851" width="172" height="145" fill="#cccccc" shape-rendering="crispEdges"/>
<rect x="1957" y="851" width="172" height="72" fill="#d0c9c9" shape-rendering="crispEdges"/>
<rect x="1958.2" y="852.2" width="169.6" height="142.6" fill="none" stroke="#ffffff" stroke-width="2.4"/>
<text x="2043.0" y="1015.8" font-family="Liberation Sans" font-size="17" fill="#ffffff" text-anchor="middle" >80</text>
<rect x="2156" y="851" width="172" height="145" fill="#e5e5e5" shape-rendering="crispEdges"/>
<rect x="2156" y="851" width="172" height="72" fill="#e6e3e2" shape-rendering="crispEdges"/>
<text x="2242.0" y="1015.8" font-family="Liberation Sans" font-size="17" fill="#ffffff" text-anchor="middle" >90</text>
<rect x="2355" y="851" width="172" height="145" fill="#fcfdfe" shape-rendering="crispEdges"/>
<rect x="2355" y="851" width="172" height="72" fill="#fffcfb" shape-rendering="crispEdges"/>
<text x="2441.0" y="1015.8" font-family="Liberation Sans" font-size="17" fill="#ffffff" text-anchor="middle" >100</text>
<text x="0" y="0" font-family="Liberation Sans" font-size="18" fill="#ffffff" text-anchor="middle" textLength="49" lengthAdjust="spacingAndGlyphs" transform="translate(354.5,883.5) rotate(-90)">Actual</text>
<text x="0" y="0" font-family="Liberation Sans" font-size="18" fill="#ffffff" text-anchor="middle" textLength="50" lengthAdjust="spacingAndGlyphs" transform="translate(354.5,965) rotate(-90)">Target</text>
</svg>
<svg style="position:absolute;left:0;top:0" width="2560" height="1552">
<text x="229" y="1122.8" font-family="Liberation Sans" font-size="40" fill="#f0f0f0" text-anchor="start" textLength="311" lengthAdjust="spacingAndGlyphs" >Current Reading</text>
<text x="230" y="1182.4" font-family="Liberation Sans" font-size="33" fill="#f0f0f0" text-anchor="start" textLength="146" lengthAdjust="spacingAndGlyphs" >x: 0.3152</text>
<text x="441.8" y="1182.4" font-family="Liberation Sans" font-size="33" fill="#f0f0f0" text-anchor="start" textLength="146.2" lengthAdjust="spacingAndGlyphs" >y: 0.3287</text>
<text x="229" y="1231" font-family="Liberation Sans" font-size="33" fill="#f0f0f0" text-anchor="start" textLength="160" lengthAdjust="spacingAndGlyphs" >u': 0.1997</text>
<text x="441.8" y="1231" font-family="Liberation Sans" font-size="33" fill="#f0f0f0" text-anchor="start" textLength="154.5" lengthAdjust="spacingAndGlyphs" >v': 0.4685</text>
<text x="229" y="1278.5" font-family="Liberation Sans" font-size="33" fill="#f0f0f0" text-anchor="start" textLength="266" lengthAdjust="spacingAndGlyphs" >cd/m²: 392.6383</text>
<text x="230" y="1327" font-family="Liberation Sans" font-size="33" fill="#f0f0f0" text-anchor="start" textLength="217.4" lengthAdjust="spacingAndGlyphs" >ΔE 2000: 2.12</text>
<text x="869.8" y="1074.3" font-family="Liberation Sans" font-size="18" fill="#cccccc" text-anchor="middle" textLength="106.3" lengthAdjust="spacingAndGlyphs" >CIE 1931 xy</text>
<defs><clipPath id="cieclip"><rect x="715.8" y="1082" width="356.20000000000005" height="234.79999999999995"/></clipPath><radialGradient id="wht" cx="880" cy="1205" r="260" gradientUnits="userSpaceOnUse"><stop offset="0" stop-color="#fff" stop-opacity="1"/><stop offset="0.12" stop-color="#fff" stop-opacity="0.9"/><stop offset="1" stop-color="#fff" stop-opacity="0"/></radialGradient></defs>
<foreignObject x="715.8" y="1082" width="356.20000000000005" height="234.79999999999995"><div style="width:100%;height:100%;background:radial-gradient(circle at 164.20000000000005px 123px, rgba(255,255,255,1) 0px, rgba(255,255,255,0.85) 25px, rgba(255,255,255,0.4) 100px, rgba(255,255,255,0) 215px), conic-gradient(from 0deg at 164.20000000000005px 123px, #c8ffc0 0deg, #f0ffb8 25deg, #ffffb0 45deg, #ffdcb0 70deg, #ffc0bc 95deg, #ff98c0 125deg, #ffa4dc 155deg, #ffb0f4 185deg, #d8b0ff 210deg, #a0c0ff 240deg, #90ffff 275deg, #80ffc8 310deg, #a8ffc0 340deg, #c8ffc0 360deg);"></div></foreignObject>
<rect x="715.8" y="1082" width="356.20000000000005" height="234.79999999999995" fill="none" stroke="#8c8c8c" stroke-width="2.5"/>
<g clip-path="url(#cieclip)"><line x1="759.3" y1="1316.8" x2="1072" y2="1119.3" stroke="#000" stroke-width="3.2"/></g>
<line x1="732.0" y1="1317.8" x2="732.0" y2="1324.8" stroke="#9c9c9c" stroke-width="2"/>
<text x="732.0" y="1345.8" font-family="Liberation Sans" font-size="20.8" fill="#e0e0e0" text-anchor="middle" >0.29</text>
<line x1="803.3" y1="1317.8" x2="803.3" y2="1324.8" stroke="#9c9c9c" stroke-width="2"/>
<text x="803.3" y="1345.8" font-family="Liberation Sans" font-size="20.8" fill="#e0e0e0" text-anchor="middle" >0.3</text>
<line x1="874.6" y1="1317.8" x2="874.6" y2="1324.8" stroke="#9c9c9c" stroke-width="2"/>
<text x="874.6" y="1345.8" font-family="Liberation Sans" font-size="20.8" fill="#e0e0e0" text-anchor="middle" >0.31</text>
<line x1="945.9" y1="1317.8" x2="945.9" y2="1324.8" stroke="#9c9c9c" stroke-width="2"/>
<text x="945.9" y="1345.8" font-family="Liberation Sans" font-size="20.8" fill="#e0e0e0" text-anchor="middle" >0.32</text>
<line x1="1017.2" y1="1317.8" x2="1017.2" y2="1324.8" stroke="#9c9c9c" stroke-width="2"/>
<text x="1017.2" y="1345.8" font-family="Liberation Sans" font-size="20.8" fill="#e0e0e0" text-anchor="middle" >0.33</text>
<line x1="707.8" y1="1149.9" x2="715.8" y2="1149.9" stroke="#9c9c9c" stroke-width="2"/>
<text x="706" y="1157.3" font-family="Liberation Sans" font-size="20.8" fill="#e0e0e0" text-anchor="end" >0.34</text>
<line x1="707.8" y1="1243.5" x2="715.8" y2="1243.5" stroke="#9c9c9c" stroke-width="2"/>
<text x="706" y="1250.9" font-family="Liberation Sans" font-size="20.8" fill="#e0e0e0" text-anchor="end" >0.32</text>
<rect x="884.5" y="1188.4" width="19" height="19" fill="#fff" stroke="#000" stroke-width="2"/>
<circle cx="1040.7" cy="1178.7" r="6.3" fill="rgb(0,0,0)" stroke="#111" stroke-width="1.5"/>
<circle cx="897.4" cy="1180.5" r="6.3" fill="rgb(26,26,26)" stroke="#111" stroke-width="1.5"/>
<circle cx="939.5" cy="1194.1" r="6.3" fill="rgb(51,51,51)" stroke="#111" stroke-width="1.5"/>
<circle cx="936.6" cy="1189.4" r="6.3" fill="rgb(76,76,76)" stroke="#111" stroke-width="1.5"/>
<circle cx="928.1" cy="1189.0" r="6.3" fill="rgb(102,102,102)" stroke="#111" stroke-width="1.5"/>
<circle cx="924.5" cy="1194.1" r="6.3" fill="rgb(128,128,128)" stroke="#111" stroke-width="1.5"/>
<circle cx="923.1" cy="1198.3" r="6.3" fill="rgb(153,153,153)" stroke="#111" stroke-width="1.5"/>
<circle cx="927.4" cy="1195.5" r="6.3" fill="rgb(178,178,178)" stroke="#111" stroke-width="1.5"/>
<circle cx="928.1" cy="1196.0" r="6.3" fill="rgb(204,204,204)" stroke="#111" stroke-width="1.5"/>
<circle cx="918.8" cy="1198.3" r="6.3" fill="rgb(230,230,230)" stroke="#111" stroke-width="1.5"/>
<circle cx="911.7" cy="1200.2" r="6.3" fill="rgb(255,255,255)" stroke="#111" stroke-width="1.5"/>
<rect x="1086" y="1040" width="1198" height="302" fill="#1c1c1c"/>
<defs><linearGradient id="th" x1="0" y1="0" x2="0" y2="1"><stop offset="0" stop-color="#363636"/><stop offset="0.48" stop-color="#2c2c2c"/><stop offset="0.52" stop-color="#141414"/><stop offset="1" stop-color="#101010"/></linearGradient></defs>
<rect x="1088" y="1042" width="1195" height="34.7" fill="url(#th)"/>
<text x="1306.3" y="1065.3" font-family="Liberation Sans" font-size="16.5" fill="#f0f0f0" text-anchor="middle" >0</text>
<text x="1399.2" y="1065.3" font-family="Liberation Sans" font-size="16.5" fill="#f0f0f0" text-anchor="middle" >10</text>
<text x="1492.2" y="1065.3" font-family="Liberation Sans" font-size="16.5" fill="#f0f0f0" text-anchor="middle" >20</text>
<text x="1585.2" y="1065.3" font-family="Liberation Sans" font-size="16.5" fill="#f0f0f0" text-anchor="middle" >30</text>
<text x="1678.1" y="1065.3" font-family="Liberation Sans" font-size="16.5" fill="#f0f0f0" text-anchor="middle" >40</text>
<text x="1771.0" y="1065.3" font-family="Liberation Sans" font-size="16.5" fill="#f0f0f0" text-anchor="middle" >50</text>
<text x="1864.0" y="1065.3" font-family="Liberation Sans" font-size="16.5" fill="#f0f0f0" text-anchor="middle" >60</text>
<text x="1956.9" y="1065.3" font-family="Liberation Sans" font-size="16.5" fill="#f0f0f0" text-anchor="middle" >70</text>
<text x="2049.9" y="1065.3" font-family="Liberation Sans" font-size="16.5" fill="#f0f0f0" text-anchor="middle" >80</text>
<text x="2142.8" y="1065.3" font-family="Liberation Sans" font-size="16.5" fill="#f0f0f0" text-anchor="middle" >90</text>
<text x="2235.8" y="1065.3" font-family="Liberation Sans" font-size="16.5" fill="#f0f0f0" text-anchor="middle" >100</text>
<rect x="1088" y="1076.7" width="1195" height="32.9" fill="#3d3d3d"/>
<text x="1101.9" y="1100.6" font-family="Liberation Sans" font-size="19.5" fill="#f4f4f4" text-anchor="start" textLength="67.7" lengthAdjust="spacingAndGlyphs" font-weight="bold" >x: CIE31</text>
<text x="1265.0" y="1100.6" font-family="Liberation Sans" font-size="19.5" fill="#ececec" text-anchor="start" textLength="53.2" lengthAdjust="spacingAndGlyphs" >0.3333</text>
<text x="1358.0" y="1100.6" font-family="Liberation Sans" font-size="19.5" fill="#ececec" text-anchor="start" textLength="53.2" lengthAdjust="spacingAndGlyphs" >0.3132</text>
<text x="1450.9" y="1100.6" font-family="Liberation Sans" font-size="19.5" fill="#ececec" text-anchor="start" textLength="53.2" lengthAdjust="spacingAndGlyphs" >0.3191</text>
<text x="1543.8" y="1100.6" font-family="Liberation Sans" font-size="19.5" fill="#ececec" text-anchor="start" textLength="53.2" lengthAdjust="spacingAndGlyphs" >0.3187</text>
<text x="1636.8" y="1100.6" font-family="Liberation Sans" font-size="19.5" fill="#ececec" text-anchor="start" textLength="53.2" lengthAdjust="spacingAndGlyphs" >0.3175</text>
<text x="1729.8" y="1100.6" font-family="Liberation Sans" font-size="19.5" fill="#ececec" text-anchor="start" textLength="53.2" lengthAdjust="spacingAndGlyphs" >0.3170</text>
<text x="1822.7" y="1100.6" font-family="Liberation Sans" font-size="19.5" fill="#ececec" text-anchor="start" textLength="53.2" lengthAdjust="spacingAndGlyphs" >0.3168</text>
<text x="1915.7" y="1100.6" font-family="Liberation Sans" font-size="19.5" fill="#ececec" text-anchor="start" textLength="53.2" lengthAdjust="spacingAndGlyphs" >0.3174</text>
<text x="2008.6" y="1100.6" font-family="Liberation Sans" font-size="19.5" fill="#ececec" text-anchor="start" textLength="53.2" lengthAdjust="spacingAndGlyphs" >0.3175</text>
<text x="2101.6" y="1100.6" font-family="Liberation Sans" font-size="19.5" fill="#ececec" text-anchor="start" textLength="53.2" lengthAdjust="spacingAndGlyphs" >0.3162</text>
<text x="2194.5" y="1100.6" font-family="Liberation Sans" font-size="19.5" fill="#ececec" text-anchor="start" textLength="53.2" lengthAdjust="spacingAndGlyphs" >0.3152</text>
<rect x="1088" y="1109.6" width="1195" height="32.9" fill="#7f7f7f"/>
<text x="1101.9" y="1133.5" font-family="Liberation Sans" font-size="19.5" fill="#f4f4f4" text-anchor="start" textLength="67.7" lengthAdjust="spacingAndGlyphs" font-weight="bold" >y: CIE31</text>
<text x="1265.0" y="1133.5" font-family="Liberation Sans" font-size="19.5" fill="#ececec" text-anchor="start" textLength="53.2" lengthAdjust="spacingAndGlyphs" >0.3333</text>
<text x="1358.0" y="1133.5" font-family="Liberation Sans" font-size="19.5" fill="#ececec" text-anchor="start" textLength="53.2" lengthAdjust="spacingAndGlyphs" >0.3329</text>
<text x="1450.9" y="1133.5" font-family="Liberation Sans" font-size="19.5" fill="#ececec" text-anchor="start" textLength="53.2" lengthAdjust="spacingAndGlyphs" >0.3300</text>
<text x="1543.8" y="1133.5" font-family="Liberation Sans" font-size="19.5" fill="#ececec" text-anchor="start" textLength="53.2" lengthAdjust="spacingAndGlyphs" >0.3310</text>
<text x="1636.8" y="1133.5" font-family="Liberation Sans" font-size="19.5" fill="#ececec" text-anchor="start" textLength="53.2" lengthAdjust="spacingAndGlyphs" >0.3311</text>
<text x="1729.8" y="1133.5" font-family="Liberation Sans" font-size="19.5" fill="#ececec" text-anchor="start" textLength="53.2" lengthAdjust="spacingAndGlyphs" >0.3300</text>
<text x="1822.7" y="1133.5" font-family="Liberation Sans" font-size="19.5" fill="#ececec" text-anchor="start" textLength="53.2" lengthAdjust="spacingAndGlyphs" >0.3291</text>
<text x="1915.7" y="1133.5" font-family="Liberation Sans" font-size="19.5" fill="#ececec" text-anchor="start" textLength="53.2" lengthAdjust="spacingAndGlyphs" >0.3297</text>
<text x="2008.6" y="1133.5" font-family="Liberation Sans" font-size="19.5" fill="#ececec" text-anchor="start" textLength="53.2" lengthAdjust="spacingAndGlyphs" >0.3296</text>
<text x="2101.6" y="1133.5" font-family="Liberation Sans" font-size="19.5" fill="#ececec" text-anchor="start" textLength="53.2" lengthAdjust="spacingAndGlyphs" >0.3291</text>
<text x="2194.5" y="1133.5" font-family="Liberation Sans" font-size="19.5" fill="#ececec" text-anchor="start" textLength="53.2" lengthAdjust="spacingAndGlyphs" >0.3287</text>
<rect x="1088" y="1142.5" width="1195" height="32.9" fill="#3d3d3d"/>
<text x="1101.9" y="1166.4" font-family="Liberation Sans" font-size="19.5" fill="#f4f4f4" text-anchor="start" font-weight="bold" >Y</text>
<text x="1265.0" y="1166.4" font-family="Liberation Sans" font-size="19.5" fill="#ececec" text-anchor="start" textLength="53.2" lengthAdjust="spacingAndGlyphs" >0.0000</text>
<text x="1358.0" y="1166.4" font-family="Liberation Sans" font-size="19.5" fill="#ececec" text-anchor="start" textLength="53.2" lengthAdjust="spacingAndGlyphs" >2.5727</text>
<text x="1450.9" y="1166.4" font-family="Liberation Sans" font-size="19.5" fill="#ececec" text-anchor="start" textLength="63.2" lengthAdjust="spacingAndGlyphs" >11.0983</text>
<text x="1543.8" y="1166.4" font-family="Liberation Sans" font-size="19.5" fill="#ececec" text-anchor="start" textLength="63.2" lengthAdjust="spacingAndGlyphs" >26.4871</text>
<text x="1636.8" y="1166.4" font-family="Liberation Sans" font-size="19.5" fill="#ececec" text-anchor="start" textLength="63.2" lengthAdjust="spacingAndGlyphs" >50.5128</text>
<text x="1729.8" y="1166.4" font-family="Liberation Sans" font-size="19.5" fill="#ececec" text-anchor="start" textLength="63.2" lengthAdjust="spacingAndGlyphs" >82.9070</text>
<text x="1822.7" y="1166.4" font-family="Liberation Sans" font-size="19.5" fill="#ececec" text-anchor="start" textLength="73.1" lengthAdjust="spacingAndGlyphs" >120.7454</text>
<text x="1915.7" y="1166.4" font-family="Liberation Sans" font-size="19.5" fill="#ececec" text-anchor="start" textLength="73.1" lengthAdjust="spacingAndGlyphs" >169.6883</text>
<text x="2008.6" y="1166.4" font-family="Liberation Sans" font-size="19.5" fill="#ececec" text-anchor="start" textLength="73.1" lengthAdjust="spacingAndGlyphs" >232.5073</text>
<text x="2101.6" y="1166.4" font-family="Liberation Sans" font-size="19.5" fill="#ececec" text-anchor="start" textLength="73.1" lengthAdjust="spacingAndGlyphs" >307.3544</text>
<text x="2194.5" y="1166.4" font-family="Liberation Sans" font-size="19.5" fill="#ececec" text-anchor="start" textLength="73.1" lengthAdjust="spacingAndGlyphs" >392.6383</text>
<rect x="1088" y="1175.3" width="1195" height="32.9" fill="#7f7f7f"/>
<text x="1101.9" y="1199.2" font-family="Liberation Sans" font-size="19.5" fill="#f4f4f4" text-anchor="start" textLength="70.5" lengthAdjust="spacingAndGlyphs" font-weight="bold" >Target Y</text>
<text x="1265.0" y="1199.2" font-family="Liberation Sans" font-size="19.5" fill="#ececec" text-anchor="start" textLength="53.2" lengthAdjust="spacingAndGlyphs" >0.0000</text>
<text x="1358.0" y="1199.2" font-family="Liberation Sans" font-size="19.5" fill="#ececec" text-anchor="start" textLength="53.2" lengthAdjust="spacingAndGlyphs" >2.5855</text>
<text x="1450.9" y="1199.2" font-family="Liberation Sans" font-size="19.5" fill="#ececec" text-anchor="start" textLength="63.2" lengthAdjust="spacingAndGlyphs" >11.3831</text>
<text x="1543.8" y="1199.2" font-family="Liberation Sans" font-size="19.5" fill="#ececec" text-anchor="start" textLength="63.2" lengthAdjust="spacingAndGlyphs" >27.3775</text>
<text x="1636.8" y="1199.2" font-family="Liberation Sans" font-size="19.5" fill="#ececec" text-anchor="start" textLength="63.2" lengthAdjust="spacingAndGlyphs" >52.3028</text>
<text x="1729.8" y="1199.2" font-family="Liberation Sans" font-size="19.5" fill="#ececec" text-anchor="start" textLength="63.2" lengthAdjust="spacingAndGlyphs" >86.1919</text>
<text x="1822.7" y="1199.2" font-family="Liberation Sans" font-size="19.5" fill="#ececec" text-anchor="start" textLength="73.1" lengthAdjust="spacingAndGlyphs" >127.6220</text>
<text x="1915.7" y="1199.2" font-family="Liberation Sans" font-size="19.5" fill="#ececec" text-anchor="start" textLength="73.1" lengthAdjust="spacingAndGlyphs" >178.0444</text>
<text x="2008.6" y="1199.2" font-family="Liberation Sans" font-size="19.5" fill="#ececec" text-anchor="start" textLength="73.1" lengthAdjust="spacingAndGlyphs" >240.3204</text>
<text x="2101.6" y="1199.2" font-family="Liberation Sans" font-size="19.5" fill="#ececec" text-anchor="start" textLength="73.1" lengthAdjust="spacingAndGlyphs" >312.9000</text>
<text x="2194.5" y="1199.2" font-family="Liberation Sans" font-size="19.5" fill="#ececec" text-anchor="start" textLength="73.1" lengthAdjust="spacingAndGlyphs" >392.6383</text>
<rect x="1088" y="1208.2" width="1195" height="32.9" fill="#3d3d3d"/>
<text x="1101.9" y="1232.1" font-family="Liberation Sans" font-size="19.5" fill="#f4f4f4" text-anchor="start" textLength="143.7" lengthAdjust="spacingAndGlyphs" font-weight="bold" >Gamma Log/Log</text>
<text x="1265.0" y="1232.1" font-family="Liberation Sans" font-size="19.5" fill="#ececec" text-anchor="start" textLength="53.2" lengthAdjust="spacingAndGlyphs" >2.2000</text>
<text x="1358.0" y="1232.1" font-family="Liberation Sans" font-size="19.5" fill="#ececec" text-anchor="start" textLength="53.2" lengthAdjust="spacingAndGlyphs" >2.2022</text>
<text x="1450.9" y="1232.1" font-family="Liberation Sans" font-size="19.5" fill="#ececec" text-anchor="start" textLength="53.2" lengthAdjust="spacingAndGlyphs" >2.2157</text>
<text x="1543.8" y="1232.1" font-family="Liberation Sans" font-size="19.5" fill="#ececec" text-anchor="start" textLength="53.2" lengthAdjust="spacingAndGlyphs" >2.2273</text>
<text x="1636.8" y="1232.1" font-family="Liberation Sans" font-size="19.5" fill="#ececec" text-anchor="start" textLength="53.2" lengthAdjust="spacingAndGlyphs" >2.2380</text>
<text x="1729.8" y="1232.1" font-family="Liberation Sans" font-size="19.5" fill="#ececec" text-anchor="start" textLength="53.2" lengthAdjust="spacingAndGlyphs" >2.2564</text>
<text x="1822.7" y="1232.1" font-family="Liberation Sans" font-size="19.5" fill="#ececec" text-anchor="start" textLength="53.2" lengthAdjust="spacingAndGlyphs" >2.3084</text>
<text x="1915.7" y="1232.1" font-family="Liberation Sans" font-size="19.5" fill="#ececec" text-anchor="start" textLength="53.2" lengthAdjust="spacingAndGlyphs" >2.3337</text>
<text x="2008.6" y="1232.1" font-family="Liberation Sans" font-size="19.5" fill="#ececec" text-anchor="start" textLength="53.2" lengthAdjust="spacingAndGlyphs" >2.3481</text>
<text x="2101.6" y="1232.1" font-family="Liberation Sans" font-size="19.5" fill="#ececec" text-anchor="start" textLength="53.2" lengthAdjust="spacingAndGlyphs" >2.3733</text>
<text x="2194.5" y="1232.1" font-family="Liberation Sans" font-size="19.5" fill="#ececec" text-anchor="start" textLength="53.2" lengthAdjust="spacingAndGlyphs" >2.2000</text>
<rect x="1088" y="1241.1" width="1195" height="32.9" fill="#7f7f7f"/>
<text x="1101.9" y="1265.0" font-family="Liberation Sans" font-size="19.5" fill="#f4f4f4" text-anchor="start" textLength="33" lengthAdjust="spacingAndGlyphs" font-weight="bold" >CCT</text>
<text x="1265.0" y="1265.0" font-family="Liberation Sans" font-size="19.5" fill="#ececec" text-anchor="start" textLength="83.1" lengthAdjust="spacingAndGlyphs" >5456.0000</text>
<text x="1358.0" y="1265.0" font-family="Liberation Sans" font-size="19.5" fill="#ececec" text-anchor="start" textLength="83.1" lengthAdjust="spacingAndGlyphs" >6448.0000</text>
<text x="1450.9" y="1265.0" font-family="Liberation Sans" font-size="19.5" fill="#ececec" text-anchor="start" textLength="83.1" lengthAdjust="spacingAndGlyphs" >6158.0000</text>
<text x="1543.8" y="1265.0" font-family="Liberation Sans" font-size="19.5" fill="#ececec" text-anchor="start" textLength="83.1" lengthAdjust="spacingAndGlyphs" >6171.0000</text>
<text x="1636.8" y="1265.0" font-family="Liberation Sans" font-size="19.5" fill="#ececec" text-anchor="start" textLength="83.1" lengthAdjust="spacingAndGlyphs" >6235.0000</text>
<text x="1729.8" y="1265.0" font-family="Liberation Sans" font-size="19.5" fill="#ececec" text-anchor="start" textLength="83.1" lengthAdjust="spacingAndGlyphs" >6267.0000</text>
<text x="1822.7" y="1265.0" font-family="Liberation Sans" font-size="19.5" fill="#ececec" text-anchor="start" textLength="83.1" lengthAdjust="spacingAndGlyphs" >6284.0000</text>
<text x="1915.7" y="1265.0" font-family="Liberation Sans" font-size="19.5" fill="#ececec" text-anchor="start" textLength="83.1" lengthAdjust="spacingAndGlyphs" >6246.0000</text>
<text x="2008.6" y="1265.0" font-family="Liberation Sans" font-size="19.5" fill="#ececec" text-anchor="start" textLength="83.1" lengthAdjust="spacingAndGlyphs" >6244.0000</text>
<text x="2101.6" y="1265.0" font-family="Liberation Sans" font-size="19.5" fill="#ececec" text-anchor="start" textLength="83.1" lengthAdjust="spacingAndGlyphs" >6314.0000</text>
<text x="2194.5" y="1265.0" font-family="Liberation Sans" font-size="19.5" fill="#ececec" text-anchor="start" textLength="83.1" lengthAdjust="spacingAndGlyphs" >6373.0000</text>
<rect x="1088" y="1274.0" width="1195" height="32.9" fill="#3d3d3d"/>
<text x="1101.9" y="1297.9" font-family="Liberation Sans" font-size="19.5" fill="#f4f4f4" text-anchor="start" textLength="70" lengthAdjust="spacingAndGlyphs" font-weight="bold" >ΔE 2000</text>
<text x="1265.0" y="1297.9" font-family="Liberation Sans" font-size="19.5" fill="#ececec" text-anchor="start" textLength="53.2" lengthAdjust="spacingAndGlyphs" >0.0000</text>
<text x="1358.0" y="1297.9" font-family="Liberation Sans" font-size="19.5" fill="#ececec" text-anchor="start" textLength="53.2" lengthAdjust="spacingAndGlyphs" >0.4479</text>
<text x="1450.9" y="1297.9" font-family="Liberation Sans" font-size="19.5" fill="#ececec" text-anchor="start" textLength="53.2" lengthAdjust="spacingAndGlyphs" >1.3731</text>
<text x="1543.8" y="1297.9" font-family="Liberation Sans" font-size="19.5" fill="#ececec" text-anchor="start" textLength="53.2" lengthAdjust="spacingAndGlyphs" >1.5472</text>
<text x="1636.8" y="1297.9" font-family="Liberation Sans" font-size="19.5" fill="#ececec" text-anchor="start" textLength="53.2" lengthAdjust="spacingAndGlyphs" >1.5133</text>
<text x="1729.8" y="1297.9" font-family="Liberation Sans" font-size="19.5" fill="#ececec" text-anchor="start" textLength="53.2" lengthAdjust="spacingAndGlyphs" >1.8883</text>
<text x="1822.7" y="1297.9" font-family="Liberation Sans" font-size="19.5" fill="#ececec" text-anchor="start" textLength="53.2" lengthAdjust="spacingAndGlyphs" >2.4421</text>
<text x="1915.7" y="1297.9" font-family="Liberation Sans" font-size="19.5" fill="#ececec" text-anchor="start" textLength="53.2" lengthAdjust="spacingAndGlyphs" >2.6850</text>
<text x="2008.6" y="1297.9" font-family="Liberation Sans" font-size="19.5" fill="#ececec" text-anchor="start" textLength="53.2" lengthAdjust="spacingAndGlyphs" >2.8676</text>
<text x="2101.6" y="1297.9" font-family="Liberation Sans" font-size="19.5" fill="#ececec" text-anchor="start" textLength="53.2" lengthAdjust="spacingAndGlyphs" >2.4705</text>
<text x="2194.5" y="1297.9" font-family="Liberation Sans" font-size="19.5" fill="#ececec" text-anchor="start" textLength="53.2" lengthAdjust="spacingAndGlyphs" >2.1217</text>
<rect x="1088" y="1306.9" width="1195" height="32.9" fill="#7f7f7f"/>
<text x="1101.9" y="1330.8" font-family="Liberation Sans" font-size="19.5" fill="#f4f4f4" text-anchor="start" textLength="55.5" lengthAdjust="spacingAndGlyphs" font-weight="bold" >ΔE ITP</text>
<text x="1265.0" y="1330.8" font-family="Liberation Sans" font-size="19.5" fill="#ececec" text-anchor="start" textLength="53.2" lengthAdjust="spacingAndGlyphs" >0.0057</text>
<text x="1358.0" y="1330.8" font-family="Liberation Sans" font-size="19.5" fill="#ececec" text-anchor="start" textLength="53.2" lengthAdjust="spacingAndGlyphs" >1.0282</text>
<text x="1450.9" y="1330.8" font-family="Liberation Sans" font-size="19.5" fill="#ececec" text-anchor="start" textLength="53.2" lengthAdjust="spacingAndGlyphs" >3.4479</text>
<text x="1543.8" y="1330.8" font-family="Liberation Sans" font-size="19.5" fill="#ececec" text-anchor="start" textLength="53.2" lengthAdjust="spacingAndGlyphs" >3.7894</text>
<text x="1636.8" y="1330.8" font-family="Liberation Sans" font-size="19.5" fill="#ececec" text-anchor="start" textLength="53.2" lengthAdjust="spacingAndGlyphs" >3.5312</text>
<text x="1729.8" y="1330.8" font-family="Liberation Sans" font-size="19.5" fill="#ececec" text-anchor="start" textLength="53.2" lengthAdjust="spacingAndGlyphs" >3.7550</text>
<text x="1822.7" y="1330.8" font-family="Liberation Sans" font-size="19.5" fill="#ececec" text-anchor="start" textLength="53.2" lengthAdjust="spacingAndGlyphs" >4.8134</text>
<text x="1915.7" y="1330.8" font-family="Liberation Sans" font-size="19.5" fill="#ececec" text-anchor="start" textLength="53.2" lengthAdjust="spacingAndGlyphs" >4.6617</text>
<text x="2008.6" y="1330.8" font-family="Liberation Sans" font-size="19.5" fill="#ececec" text-anchor="start" textLength="53.2" lengthAdjust="spacingAndGlyphs" >3.9723</text>
<text x="2101.6" y="1330.8" font-family="Liberation Sans" font-size="19.5" fill="#ececec" text-anchor="start" textLength="53.2" lengthAdjust="spacingAndGlyphs" >2.7359</text>
<text x="2194.5" y="1330.8" font-family="Liberation Sans" font-size="19.5" fill="#ececec" text-anchor="start" textLength="53.2" lengthAdjust="spacingAndGlyphs" >1.7976</text>
<defs><linearGradient id="tile" x1="0" y1="0" x2="0" y2="1"><stop offset="0" stop-color="#a9a9a9"/><stop offset="1" stop-color="#5c5c5c"/></linearGradient><linearGradient id="tbar" x1="0" y1="0" x2="0" y2="1"><stop offset="0" stop-color="#484848"/><stop offset="1" stop-color="#262626"/></linearGradient><linearGradient id="tsel" x1="0" y1="0" x2="0" y2="1"><stop offset="0" stop-color="#181818"/><stop offset="1" stop-color="#3a3a3a"/></linearGradient></defs>
<rect x="1720" y="1490" width="840" height="62" fill="url(#tbar)"/>
<path d="M200.8,1552 V1494 Q200.8,1490 204.8,1490 H346.8 Q350.8,1490 350.8,1494 V1552 Z" fill="url(#tile)"/>
<rect x="205.8" y="1495" width="140" height="36" rx="3" fill="rgb(0,0,0)" stroke="rgba(0,0,0,0.25)" stroke-width="1"/>
<text x="275.8" y="1546" font-family="Liberation Sans" font-size="12" fill="#2a2a2a" text-anchor="middle" >0</text>
<path d="M352.8,1552 V1494 Q352.8,1490 356.8,1490 H498.8 Q502.8,1490 502.8,1494 V1552 Z" fill="url(#tile)"/>
<rect x="357.8" y="1495" width="140" height="36" rx="3" fill="rgb(26,26,26)" stroke="rgba(0,0,0,0.25)" stroke-width="1"/>
<text x="427.8" y="1546" font-family="Liberation Sans" font-size="12" fill="#2a2a2a" text-anchor="middle" >10</text>
<path d="M504.8,1552 V1494 Q504.8,1490 508.8,1490 H650.8 Q654.8,1490 654.8,1494 V1552 Z" fill="url(#tile)"/>
<rect x="509.8" y="1495" width="140" height="36" rx="3" fill="rgb(51,51,51)" stroke="rgba(0,0,0,0.25)" stroke-width="1"/>
<text x="579.8" y="1546" font-family="Liberation Sans" font-size="12" fill="#2a2a2a" text-anchor="middle" >20</text>
<path d="M656.8,1552 V1494 Q656.8,1490 660.8,1490 H802.8 Q806.8,1490 806.8,1494 V1552 Z" fill="url(#tile)"/>
<rect x="661.8" y="1495" width="140" height="36" rx="3" fill="rgb(76,76,76)" stroke="rgba(0,0,0,0.25)" stroke-width="1"/>
<text x="731.8" y="1546" font-family="Liberation Sans" font-size="12" fill="#2a2a2a" text-anchor="middle" >30</text>
<path d="M808.8,1552 V1494 Q808.8,1490 812.8,1490 H954.8 Q958.8,1490 958.8,1494 V1552 Z" fill="url(#tile)"/>
<rect x="813.8" y="1495" width="140" height="36" rx="3" fill="rgb(102,102,102)" stroke="rgba(0,0,0,0.25)" stroke-width="1"/>
<text x="883.8" y="1546" font-family="Liberation Sans" font-size="12" fill="#2a2a2a" text-anchor="middle" >40</text>
<path d="M960.8,1552 V1494 Q960.8,1490 964.8,1490 H1106.8 Q1110.8,1490 1110.8,1494 V1552 Z" fill="url(#tile)"/>
<rect x="965.8" y="1495" width="140" height="36" rx="3" fill="rgb(128,128,128)" stroke="rgba(0,0,0,0.25)" stroke-width="1"/>
<text x="1035.8" y="1546" font-family="Liberation Sans" font-size="12" fill="#2a2a2a" text-anchor="middle" >50</text>
<path d="M1112.8,1552 V1494 Q1112.8,1490 1116.8,1490 H1258.8 Q1262.8,1490 1262.8,1494 V1552 Z" fill="url(#tile)"/>
<rect x="1117.8" y="1495" width="140" height="36" rx="3" fill="rgb(153,153,153)" stroke="rgba(0,0,0,0.25)" stroke-width="1"/>
<text x="1187.8" y="1546" font-family="Liberation Sans" font-size="12" fill="#2a2a2a" text-anchor="middle" >60</text>
<path d="M1264.8,1552 V1494 Q1264.8,1490 1268.8,1490 H1410.8 Q1414.8,1490 1414.8,1494 V1552 Z" fill="url(#tile)"/>
<rect x="1269.8" y="1495" width="140" height="36" rx="3" fill="rgb(178,178,178)" stroke="rgba(0,0,0,0.25)" stroke-width="1"/>
<text x="1339.8" y="1546" font-family="Liberation Sans" font-size="12" fill="#2a2a2a" text-anchor="middle" >70</text>
<path d="M1416.8,1552 V1494 Q1416.8,1490 1420.8,1490 H1562.8 Q1566.8,1490 1566.8,1494 V1552 Z" fill="url(#tile)"/>
<rect x="1421.8" y="1495" width="140" height="36" rx="3" fill="rgb(204,204,204)" stroke="rgba(0,0,0,0.25)" stroke-width="1"/>
<text x="1491.8" y="1546" font-family="Liberation Sans" font-size="12" fill="#2a2a2a" text-anchor="middle" >80</text>
<path d="M1568.8,1552 V1494 Q1568.8,1490 1572.8,1490 H1714.8 Q1718.8,1490 1718.8,1494 V1552 Z" fill="url(#tile)"/>
<rect x="1573.8" y="1495" width="140" height="36" rx="3" fill="rgb(230,230,230)" stroke="rgba(0,0,0,0.25)" stroke-width="1"/>
<text x="1643.8" y="1546" font-family="Liberation Sans" font-size="12" fill="#2a2a2a" text-anchor="middle" >90</text>
<rect x="1720.8" y="1490" width="150" height="62" rx="4" fill="url(#tsel)"/>
<rect x="1725.8" y="1495" width="140" height="36" rx="3" fill="rgb(255,255,255)" stroke="rgba(0,0,0,0.25)" stroke-width="1"/>
<text x="1795.8" y="1546" font-family="Liberation Sans" font-size="12" fill="#ffffff" text-anchor="middle" font-weight="bold" >100</text>
</svg>
<svg style="position:absolute;left:2150px;top:1460px" width="410" height="92"><g transform="translate(-2150,-1460)">
<defs><linearGradient id="nb" x1="0" y1="0" x2="0" y2="1"><stop offset="0" stop-color="#b8b8b8"/><stop offset="1" stop-color="#828282"/></linearGradient><linearGradient id="nb2" x1="0" y1="0" x2="0" y2="1"><stop offset="0" stop-color="#9c9c9c"/><stop offset="1" stop-color="#666"/></linearGradient><linearGradient id="nb3" x1="0" y1="0" x2="0" y2="1"><stop offset="0" stop-color="#8a8a8a"/><stop offset="1" stop-color="#5e5e5e"/></linearGradient><radialGradient id="nc" cx="0.5" cy="0.25" r="0.75"><stop offset="0" stop-color="#8c8c8c"/><stop offset="1" stop-color="#c4c4c4"/></radialGradient><radialGradient id="nc2" cx="0.5" cy="0.2" r="0.8"><stop offset="0" stop-color="#6a6a6a"/><stop offset="1" stop-color="#9a9a9a"/></radialGradient></defs>
<rect x="2286" y="1490" width="280" height="30" rx="3" fill="url(#nb2)"/>
<circle cx="2309" cy="1510" r="10" fill="url(#nc2)"/>
<circle cx="2354" cy="1510" r="10" fill="url(#nc2)"/>
<circle cx="2399" cy="1510" r="10" fill="url(#nc2)"/>
<circle cx="2444" cy="1510" r="10" fill="url(#nc2)"/>
<circle cx="2489" cy="1510" r="10" fill="url(#nc2)"/>
<circle cx="2534" cy="1510" r="10" fill="url(#nc2)"/>
<line x1="2332.4" y1="1490" x2="2332.4" y2="1520" stroke="#4a4a4a" stroke-width="1"/>
<line x1="2377.3" y1="1490" x2="2377.3" y2="1520" stroke="#4a4a4a" stroke-width="1"/>
<line x1="2422.4" y1="1490" x2="2422.4" y2="1520" stroke="#4a4a4a" stroke-width="1"/>
<line x1="2467.7" y1="1490" x2="2467.7" y2="1520" stroke="#4a4a4a" stroke-width="1"/>
<line x1="2512.6" y1="1490" x2="2512.6" y2="1520" stroke="#4a4a4a" stroke-width="1"/>
<rect x="2236.5" y="1508" width="49" height="44" rx="3" fill="url(#nb3)"/>
<rect x="2246.6" y="1515.2" width="28.5" height="28.6" rx="4" fill="none" stroke="#262626" stroke-width="2.6"/>
<rect x="2254" y="1523" width="13.5" height="13.2" fill="#000"/>
<rect x="2286.2" y="1520.8" width="136" height="32" rx="3" fill="url(#nb)"/>
<rect x="2422.2" y="1520.8" width="140" height="32" rx="3" fill="url(#nb)"/>
<line x1="2422.2" y1="1521" x2="2422.2" y2="1552" stroke="#5a5a5a" stroke-width="1"/>
<circle cx="2317" cy="1536" r="9.5" fill="url(#nc)"/>
<circle cx="2530" cy="1536" r="9.5" fill="url(#nc)"/>
<path d="M2317.5,1531.5 L2313.5,1536 L2317.5,1540.5 M2321.5,1531.5 L2317.5,1536 L2321.5,1540.5" fill="none" stroke="#333" stroke-width="1.4"/>
<path d="M2525.5,1531.5 L2529.5,1536 L2525.5,1540.5 M2529.5,1531.5 L2533.5,1536 L2529.5,1540.5" fill="none" stroke="#333" stroke-width="1.4"/>
<text x="2343" y="1543.6" font-family="Liberation Sans" font-size="20.2" fill="#2c2c2c" text-anchor="start" textLength="52" lengthAdjust="spacingAndGlyphs" >Back</text>
<text x="2449.5" y="1543.6" font-family="Liberation Sans" font-size="20.2" fill="#2c2c2c" text-anchor="start" textLength="53" lengthAdjust="spacingAndGlyphs" >Next</text>
<g opacity="0.66">
<path d="M2187.6,1513.6 L2227.4,1510.3 L2224.1,1479.5 L2174.2,1468.9 L2176.2,1519.3 L2208.7,1533 L2263,1517.6 L2232,1511" fill="none" stroke="#e4e4e4" stroke-width="7.5" stroke-linejoin="round" stroke-linecap="round"/>
<path d="M2188.4,1487.6 L2194.9,1483.5 L2198.1,1484.4 L2206.7,1494.9 L2232.2,1468.9 L2233.5,1470.6 L2205.5,1507.9 L2202.2,1506.3 Z" fill="#e4e4e4" stroke="#e4e4e4" stroke-width="3" stroke-linejoin="round"/>
<text x="2234.5" y="1508.3" font-family="Liberation Sans" font-weight="bold" font-size="36.5" fill="none" stroke="#e0e0e0" stroke-width="5.6" stroke-linejoin="round" textLength="196" lengthAdjust="spacingAndGlyphs">NOTEBOOK</text>
<text x="2431" y="1508.3" font-family="Liberation Sans" font-weight="bold" font-size="36.5" fill="none" stroke="#e0e0e0" stroke-width="5.6" stroke-linejoin="round" textLength="118" lengthAdjust="spacingAndGlyphs">CHECK</text>
<path d="M2187.6,1513.6 L2227.4,1510.3 L2224.1,1479.5 L2174.2,1468.9 L2176.2,1519.3 L2208.7,1533 L2263,1517.6 L2232,1511" fill="none" stroke="#a42432" stroke-width="4.4" stroke-linejoin="round" stroke-linecap="round"/>
<path d="M2188.4,1487.6 L2194.9,1483.5 L2198.1,1484.4 L2206.7,1494.9 L2232.2,1468.9 L2233.5,1470.6 L2205.5,1507.9 L2202.2,1506.3 Z" fill="#1a1a1a" stroke="#1a1a1a" stroke-width="0.5"/>
<text x="2234.5" y="1508.3" font-family="Liberation Sans" font-weight="bold" font-size="36.5" fill="#a42432" stroke="#a42432" stroke-width="1.6" stroke-linejoin="round" textLength="196" lengthAdjust="spacingAndGlyphs">NOTEBOOK</text>
</g>
<text x="2431" y="1508.3" font-family="Liberation Sans" font-weight="bold" font-size="36.5" fill="#1e1e1e" stroke="#1e1e1e" stroke-width="1.2" stroke-linejoin="round" opacity="0.5" textLength="118" lengthAdjust="spacingAndGlyphs">CHECK</text>
</g></svg>
<div style="position:absolute;left:2554px;top:88px;width:6px;height:1464px;background:linear-gradient(90deg,rgba(0,0,0,0),rgba(0,0,0,0.62));"></div>
</body></html>
